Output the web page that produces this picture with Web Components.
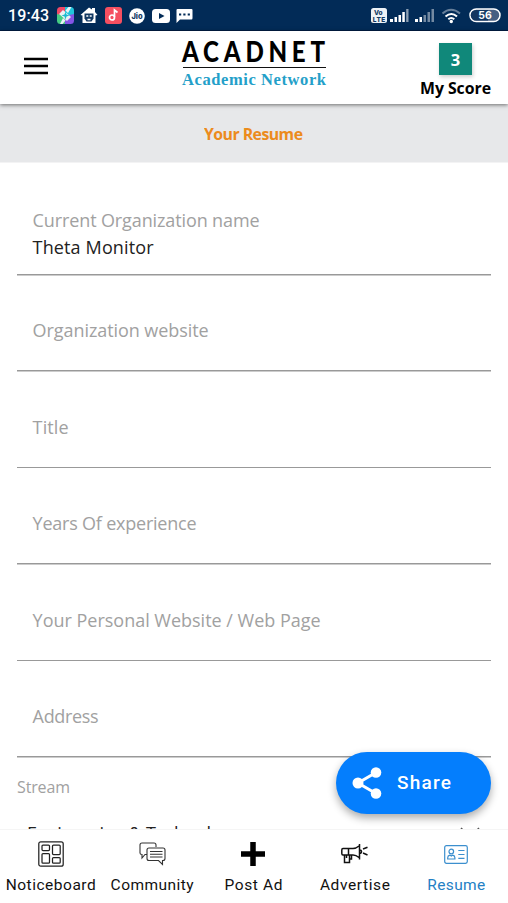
<!DOCTYPE html>
<html lang="en">
<head>
<meta charset="utf-8">
<title>Acadnet – Your Resume</title>
<style>
html,body{margin:0;height:100%;overflow:hidden;background:#fff}
body{font-family:Lato,"Noto Sans",sans-serif}
</style>
</head>
<body>
<app-screen></app-screen>
<script>
function define(name, html, setup) {
  const t = document.createElement('template');
  t.innerHTML = html;
  customElements.define(name, class extends HTMLElement {
    connectedCallback() {
      if (this.shadowRoot) return;
      this.attachShadow({mode: 'open'}).append(t.content.cloneNode(true));
      if (setup) setup(this, this.shadowRoot);
    }
  });
}

/* Single line of text tracked out to a given width; sx condenses the glyphs */
define('fit-text', `<style>
:host{display:inline-block;white-space:nowrap;font-variant-ligatures:none}
span{display:inline-block;transform-origin:0 50%}
</style><span></span>`, (el, root) => {
  const s = root.querySelector('span');
  s.textContent = el.getAttribute('text');
  const sx = +(el.getAttribute('sx') || 1);
  const w = +el.getAttribute('w');
  const n = s.textContent.length;
  const gap = (w / sx - s.getBoundingClientRect().width) / (n - 1);
  s.style.letterSpacing = gap + 'px';
  s.style.marginRight = -gap - (w / sx - w) + 'px';
  if (sx !== 1) s.style.transform = `scaleX(${sx})`;
});

define('status-bar', `<style>
:host{display:flex;box-sizing:border-box;height:31px;padding:1px 7px 0 8px;align-items:center;background:#022b57;border-bottom:1px solid #011c43;color:#fff;font:500 16px Roboto,sans-serif}
svg{display:block;flex:none}
.sp{flex:1}
.i1{margin-left:8px}.i2{margin-left:6px}.i3{margin-left:7px}.i4{margin-left:7px}.i5{margin-left:7px}.i6{margin-left:6px}
</style>
<fit-text w="41" text="19:43"></fit-text>
<svg class="i1" width="17" height="17" viewBox="0 0 17 17"><defs><clipPath id="c"><rect width="17" height="17" rx="3.5"/></clipPath></defs><g clip-path="url(#c)"><path fill="#ef4866" d="M0 0h9v9H0z"/><path fill="#20c5dc" d="M8 0h9v9H8z"/><path fill="#45cc83" d="M0 7l9 2v8H0z"/><path fill="#8454e5" d="M17 7v10H8V9z"/><path d="M6 3l8 7-4 4-8-7zM8.500 3.500l3-3.500 3 0-3.500 6zM8.500 13.500L5.500 17H3l3-6z" fill="#e9f1f5"/><path d="M8.500 4.500l1 3 3 1-3 1-1 3-1-3-3-1 3-1z" fill="#1bbad0"/></g></svg>
<svg class="i2" width="18" height="17" viewBox="0 0 18 17"><path d="M9 .5l3 2V1h3v4l2.500 3-2 .5V16h-13V8.500l-2-.5z" fill="#fff"/><path d="M4.500 6.500h9v5l-2 3h-5l-2-3z" fill="#123963"/><path d="M6.300 9h2M9.700 9h2M7.500 12.500h3" stroke="#fff" stroke-width="1.300"/></svg>
<svg class="i3" width="17" height="17" viewBox="0 0 17 17"><rect width="17" height="17" rx="3" fill="#f54f60"/><circle cx="7" cy="10.500" r="2.500" fill="none" stroke="#fff" stroke-width="1.700"/><path d="M9.500 10V3l3 2.500" fill="none" stroke="#fff" stroke-width="1.700"/></svg>
<svg class="i4" width="16" height="16" viewBox="0 0 16 16"><circle cx="8" cy="8" r="7.800" fill="#fff"/><text x="8" y="10.800" text-anchor="middle" font-family="Inter,sans-serif" font-weight="800" font-size="7.500" fill="#123963">Jio</text></svg>
<svg class="i5" width="18" height="14" viewBox="0 0 18 14"><rect width="18" height="14" rx="3.500" fill="#fff"/><path d="M7 4l5.500 3L7 10z" fill="#022b57"/></svg>
<svg class="i6" width="17" height="16" viewBox="0 0 17 16"><path d="M1.500 1h14q1 0 1 1v8q0 1.500-1 1.500H4L.5 15V2q0-1 1-1z" fill="#fff"/><path d="M3 6.500h2.200M7.300 6.500h2.200M11.700 6.500h2.200" stroke="#022b57" stroke-width="2.200"/></svg>
<span class="sp"></span>
<svg width="130" height="18" viewBox="0 0 130 18">
<rect width="16" height="15" y="1" rx="2.500" fill="#edf2f6"/><text x="3" y="8" font-family="Inter,sans-serif" font-weight="800" font-size="6.500" fill="#123963">Vo</text><text x="1.800" y="14.500" font-family="Inter,sans-serif" font-weight="800" font-size="6.500" textLength="12.500" fill="#123963">LTE</text>
<g fill="#fff"><path d="M19 12h3v3h-3zM23.500 10h2.500v5h-2.500zM27.500 8H30v7h-2.500zM31.300 5h2.500v10h-2.500z"/><path opacity=".55" d="M35.200 2h2.300v13h-2.300z"/>
<path d="M44 12h3v3h-3zM48.500 10H51v5h-2.500z"/><path opacity=".45" d="M52.500 8H55v7h-2.500zM56.500 5H59v10h-2.500zM60.500 2H63v13h-2.500z"/></g>
<g fill="none" stroke="#fff"><path d="M71.500 6.500Q80-1 89 6.500" opacity=".4" stroke-width="2"/><path d="M74.500 9.500q6-5 11.500 0" stroke-width="2.100"/><path d="M77.300 12.200q3-2.500 6 0" stroke-width="2"/></g><circle cx="80.300" cy="14.500" r="1.700" fill="#fff"/>
<rect x="99" y="2" width="30" height="12.500" rx="6.250" fill="#475f82" stroke="#fff" stroke-width="1.500"/><path d="M105 3h12v10.500h-12a5.200 5.200 0 0 1 0-10.500" fill="#133762"/><text x="114" y="12" text-anchor="middle" font-family="Inter,sans-serif" font-weight="700" font-size="10.500" fill="#fff">56</text></svg>
`);

define('app-header', `<style>
:host{display:grid;grid-template-columns:1fr 144px 1fr;box-sizing:border-box;height:73px;padding:0 17px;background:#fff;box-shadow:0 1px 4px #0008;position:relative;z-index:1}
.menu{align-self:center;margin:-3px 0 0 7px}
.menu svg{display:block}
.brand{display:flex;flex-direction:column;padding-top:5px}
.n{font:900 28px/31px Lato,sans-serif;color:#000;height:31px}
.r{height:1.300px;background:#111;margin:0 0 2px 1px}
.s{font:700 16.500px/20px "Liberation Serif",serif;color:#249fc9}
.score{justify-self:end;display:flex;flex-direction:column;align-items:center;padding-top:12px}
.b{width:33px;height:32px;background:#10887a;color:#fff;font:700 16.500px/34px "Open Sans",sans-serif;text-align:center;box-shadow:1px 2px 4px #0003}
.m{font:700 16.500px/22px "Open Sans",sans-serif;color:#000;margin-top:2px}
</style>
<div class="menu"><svg width="24" height="18"><path d="M0 2h24M0 9h24M0 16h24" stroke="#000" stroke-width="2.400"/></svg></div>
<div class="brand"><div class="n"><fit-text w="143" sx=".86" text="ACADNET"></fit-text></div><div class="r"></div><div class="s"><fit-text w="144" text="Academic Network"></fit-text></div></div>
<div class="score"><div class="b">3</div><div class="m"><fit-text w="71" sx=".96" text="My Score"></fit-text></div></div>`);

define('page-title', `<style>
:host{display:flex;height:58px;align-items:center;justify-content:center;background:#e7e8ea;border-bottom:1px solid #f3f3f4;color:#ec8b1d;font:700 16.500px/22px "Open Sans",sans-serif}
</style><slot></slot>`);

define('text-field', `<style>
:host{display:flex;flex-direction:column;justify-content:flex-end;box-sizing:border-box;height:96.400px;margin:0 17px;padding:0 0 27.500px 15.600px;background:linear-gradient(#999,#999) 0 100%/100% 1.500px no-repeat;color:#a1a1a1;font:400 18px/27px "Open Sans",sans-serif}
:host([filled]){padding-bottom:14.500px}
.v{color:#222}
.v:empty{display:none}
</style><div class="l"></div><div class="v"></div>`, (el, root) => {
  const mk = (k, w) => { const f = document.createElement('fit-text'); f.setAttribute('text', el.getAttribute(k)); f.setAttribute('w', el.getAttribute(w)); return f; };
  root.querySelector('.l').append(mk('label', 'lw'));
  if (el.hasAttribute('value')) root.querySelector('.v').append(mk('value', 'vw'));
});

define('select-field', `<style>
:host{display:block;padding:18px 17px 0;color:#a1a1a1;font:400 16px/22px "Open Sans",sans-serif}
.row{display:flex;justify-content:space-between;margin:22px 11px 0 10px;color:#222;font-size:18px;line-height:26px}
svg{margin-top:7px}
</style><fit-text w="53" text="Stream"></fit-text>
<div class="row"><fit-text w="213" text="Engineering &amp; Technology"></fit-text><svg width="20" height="12"><path d="M1 1l9 9 9-9" fill="none" stroke="#555" stroke-width="1.500"/></svg></div>`);

define('share-button', `<style>
:host{position:absolute;right:17px;top:751.500px;display:flex;align-items:center;box-sizing:border-box;width:155px;height:62px;padding-left:16px;gap:15px;border-radius:31px;background:#047efd;color:#fff;font:500 19px Roboto,sans-serif;box-shadow:0 4px 9px #0005}
</style><svg width="30" height="32" viewBox="0 0 30 32"><path d="M24 5.500L6 16l18 10.500" fill="none" stroke="#fff" stroke-width="3"/><g fill="#fff"><circle cx="24" cy="5.500" r="5.300"/><circle cx="6" cy="16" r="5.500"/><circle cx="24" cy="26.500" r="5.300"/></g></svg><fit-text w="54" text="Share"></fit-text>`);

define('nav-item', `<style>
:host{display:flex;flex-direction:column;align-items:center;color:#111;font:400 15.500px/20px Roboto,sans-serif;padding-top:9px}
:host([active]){color:#2480c4}
.i{height:30px;display:flex;align-items:center;margin-bottom:6px}
</style><div class="i"><slot></slot></div><div class="t"></div>`, (el, root) => {
  const f = document.createElement('fit-text');
  f.setAttribute('text', el.getAttribute('label')); f.setAttribute('w', el.getAttribute('w'));
  root.querySelector('.t').append(f);
});

define('bottom-nav', `<style>
:host{position:absolute;left:0;right:0;bottom:0;height:74px;display:grid;grid-template-columns:repeat(5,1fr);box-sizing:border-box;padding-right:1px;border-top:1px solid #f5f5f5;background:#fff}
svg{display:block;fill:none}
</style>
<nav-item label="Noticeboard" w="90"><svg width="26" height="26" viewBox="0 0 26 26" stroke="#222" stroke-width="1.250"><rect x=".8" y=".8" width="24.400" height="24.400" rx="2"/><rect x="4" y="4" width="7.500" height="5.500" rx="1"/><rect x="14.500" y="4" width="7.700" height="9.500" rx="1"/><rect x="4" y="12.500" width="7.500" height="9.700" rx="1"/><rect x="14.500" y="16.500" width="7.700" height="5.700" rx="1"/></svg></nav-item>
<nav-item label="Community" w="83"><svg width="27" height="24" viewBox="0 0 27 24" stroke="#333" stroke-width="1.100"><path d="M17 5V3q0-2-2-2H3Q1 1 1 3v8q0 1.500 2 1.500V16l3-3.500h2"/><path d="M10 6h14q2 0 2 2v8.500q0 2-2 2h-.5v4l-4-4H10q-2 0-2-2V8q0-2 2-2zM11 9.500h12.500M11 12.300h12.500M11 15h12.500"/></svg></nav-item>
<nav-item label="Post Ad" w="58"><svg width="26" height="26"><path d="M13 1v24M1 13h24" stroke="#000" stroke-width="5.500"/></svg></nav-item>
<nav-item label="Advertise" w="70"><svg width="27" height="22" viewBox="0 0 27 22" stroke="#111" stroke-width="1.500"><path d="M18.500 1v15.500M18 3q-3 2.500-6 2.500H2Q.8 5.500.8 7v3.500Q.8 12 2 12h10q3 0 6 2.500M7.500 5.500V12M3.500 12v7.500h5V12M5.500 12v3M8.500 16h2V12M18.500 7q2 0 2 1.700t-2 1.700M22 6l4.500-1.800M22 10l4.500 2"/></svg></nav-item>
<nav-item active label="Resume" w="58"><svg width="24" height="19" viewBox="0 0 24 19" stroke="#3c8fce" stroke-width="1.200"><rect x=".7" y=".7" width="22.600" height="17.600" rx="1.700"/><circle cx="7.300" cy="6.500" r="2.300"/><path d="M3.700 14v-1.200q0-2.200 2.200-2.700l1.400 1 1.400-1q2.200.5 2.200 2.700V14zM14.300 5.500h6.200M14.300 9.500h6.200M14.300 13.300h6.200"/></svg></nav-item>`);

define('app-screen', `<style>
:host{display:block;position:relative;width:508px;height:903px;overflow:hidden;background:#fff}
main{padding-top:16.200px}
page-title{padding-top:1px;height:57px}
</style>
<status-bar></status-bar><app-header></app-header>
<page-title><fit-text w="99" sx=".96" text="Your Resume"></fit-text></page-title>
<main>
<text-field filled label="Current Organization name" lw="227" value="Theta Monitor" vw="121"></text-field>
<text-field label="Organization website" lw="176"></text-field>
<text-field label="Title" lw="36"></text-field>
<text-field label="Years Of experience" lw="164"></text-field>
<text-field label="Your Personal Website / Web Page" lw="288"></text-field>
<text-field label="Address" lw="66"></text-field>
<select-field></select-field>
</main>
<share-button></share-button>
<bottom-nav></bottom-nav>`);
</script>
</body>
</html>
